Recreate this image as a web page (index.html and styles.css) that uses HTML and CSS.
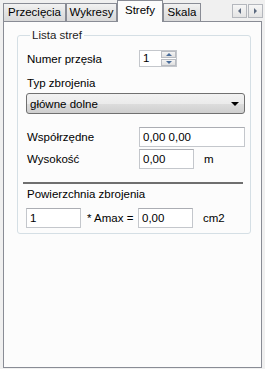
FILE: index.html
```html
<!DOCTYPE html>
<html lang="pl">
  <head>
    <meta charset="UTF-8" />
    <title>Strefy</title>
    <link rel="stylesheet" href="styles.css">
  </head>
  <body>
    <div class="window">
      <!-- Tab strip -->
      <div class="tabbar">
        <div class="tab tab-przek">Przecięcia</div>
        <div class="tab tab-wyk">Wykresy</div>
        <div class="tab tab-active">Strefy</div>
        <div class="tab tab-skala">Skala</div>
        <div class="scroll-btns">
          <span class="scroll-btn"><span class="tri-left"></span></span>
          <span class="scroll-btn"><span class="tri-right"></span></span>
        </div>
      </div>

      <!-- Page: Strefy -->
      <div class="panel">
        <fieldset class="group">
          <legend>Lista stref</legend>

          <div class="row row-spin">
            <label class="lbl">Numer przęsła</label>
            <div class="spin">
              <span class="spin-val">1</span>
              <div class="spin-btns">
                <span class="spin-btn"><span class="tri-up"></span></span>
                <span class="spin-btn"><span class="tri-down"></span></span>
              </div>
            </div>
          </div>

          <div class="caption">Typ zbrojenia</div>
          <div class="combo">
            <span>główne dolne</span>
            <span class="tri-down-black"></span>
          </div>

          <div class="row row-coords">
            <label class="lbl">Współrzędne</label>
            <div class="field field-wide">0,00 0,00</div>
          </div>
          <div class="row row-height">
            <label class="lbl">Wysokość</label>
            <div class="field field-short">0,00</div>
            <span class="unit">m</span>
          </div>

          <div class="separator"></div>

          <div class="caption caption-area">Powierzchnia zbrojenia</div>
          <div class="row row-area">
            <div class="field field-short">1</div>
            <span class="amax">* Amax =</span>
            <div class="field field-short">0,00</div>
            <span class="unit">cm2</span>
          </div>
        </fieldset>
      </div>
    </div>
  </body>
</html>
```

FILE: styles.css
```css
/* Base */
body {
  margin: 0;
  background-color: #f0f0f0;
  color: #000;
  font-family: "Liberation Sans", Arial, sans-serif;
  font-size: 11.5px;
}

.window {
  width: 265px;
  height: 369px;
}

/* Tab strip */
.tabbar {
  display: flex;
  align-items: flex-end;
  height: 21px;
  padding-left: 3px;
}

.tab {
  box-sizing: border-box;
  height: 18px;
  line-height: 16px;
  text-align: center;
  border: 1px solid #898c95;
  border-bottom: none;
  background: linear-gradient(#f2f2f2, #e3e3e3 50%, #d9d9d9);
}

.tab-przek {
  width: 63px;
}

.tab-wyk {
  width: 51px;
}

.tab-active {
  width: 46px;
  height: 22px;
  line-height: 19px;
  margin-bottom: -1px;
  background: #fcfcfc;
  position: relative;
  z-index: 1;
}

.tab-skala {
  width: 38px;
}

.scroll-btns {
  display: flex;
  margin-left: auto;
  margin-right: 2px;
  align-self: flex-start;
  margin-top: 4px;
  gap: 1px;
}

.scroll-btn {
  box-sizing: border-box;
  width: 15px;
  height: 14px;
  border: 1px solid #b4b7bd;
  background: linear-gradient(#f6f6f6, #e4e4e4);
  display: flex;
  align-items: center;
  justify-content: center;
}

.tri-left {
  width: 0;
  height: 0;
  border-top: 3px solid transparent;
  border-bottom: 3px solid transparent;
  border-right: 3px solid #5c6a80;
}

.tri-right {
  width: 0;
  height: 0;
  border-top: 3px solid transparent;
  border-bottom: 3px solid transparent;
  border-left: 3px solid #5c6a80;
}

/* Panel */
.panel {
  box-sizing: border-box;
  width: 259px;
  height: 347px;
  margin-left: 3px;
  border: 1px solid #898c95;
  background: #fcfcfc;
  padding: 7px 10px 0 13px;
}

/* Group box */
.group {
  margin: 0;
  padding: 8px 5px 5px 8px;
  border: 1px solid #d5dfe5;
  border-radius: 3px;
}

.group legend {
  padding: 0 2px;
  margin-left: 4px;
  line-height: 13px;
  color: #1e1e1e;
}

.row {
  display: flex;
  align-items: center;
}

.lbl {
  width: 112px;
  padding-left: 1px;
}

.caption {
  line-height: 13px;
  margin-top: 10px;
  padding-left: 1px;
}

/* Spin box */
.row-spin {
  height: 17px;
}

.spin {
  box-sizing: border-box;
  display: flex;
  width: 38px;
  height: 17px;
  border: 1px solid #c4c7cc;
  background: #fff;
}

.spin-val {
  flex: 1;
  padding-left: 3px;
  line-height: 15px;
}

.spin-btns {
  display: flex;
  flex-direction: column;
  width: 15px;
  gap: 1px;
}

.spin-btn {
  flex: 1;
  display: flex;
  align-items: center;
  justify-content: center;
  border: 1px solid #b9bcc2;
  background: linear-gradient(#f4f4f4, #e0e0e0);
}

.tri-up {
  width: 0;
  height: 0;
  border-left: 3px solid transparent;
  border-right: 3px solid transparent;
  border-bottom: 3px solid #4a6d9a;
}

.tri-down {
  width: 0;
  height: 0;
  border-left: 3px solid transparent;
  border-right: 3px solid transparent;
  border-top: 3px solid #4a6d9a;
}

/* Combo box */
.combo {
  box-sizing: border-box;
  display: flex;
  align-items: center;
  justify-content: space-between;
  height: 21px;
  width: 219px;
  margin-top: 3px;
  padding: 0 5px 0 3px;
  border: 1px solid #707070;
  border-radius: 3px;
  background: linear-gradient(#f2f2f2, #ebebeb 50%, #dddddd 51%, #cfcfcf);
}

.tri-down-black {
  width: 0;
  height: 0;
  border-left: 4px solid transparent;
  border-right: 4px solid transparent;
  border-top: 4px solid #000;
}

/* Text fields */
.field {
  box-sizing: border-box;
  height: 20px;
  line-height: 18px;
  padding-left: 3px;
  border: 1px solid #c4c7cc;
  border-top-color: #abadb3;
  background: #fff;
}

.field-wide {
  width: 106px;
}

.field-short {
  width: 55px;
}

.row-coords {
  margin-top: 13px;
}

.row-height {
  margin-top: 2px;
}

.unit {
  margin-left: 10px;
}

.separator {
  height: 2px;
  margin: 13px 2px 0 -3px;
  background: #6f6f6f;
}

.caption-area {
  margin-top: 4px;
}

.row-area {
  margin-top: 7px;
}

.amax {
  box-sizing: border-box;
  width: 57px;
  padding-left: 6px;
}
```
